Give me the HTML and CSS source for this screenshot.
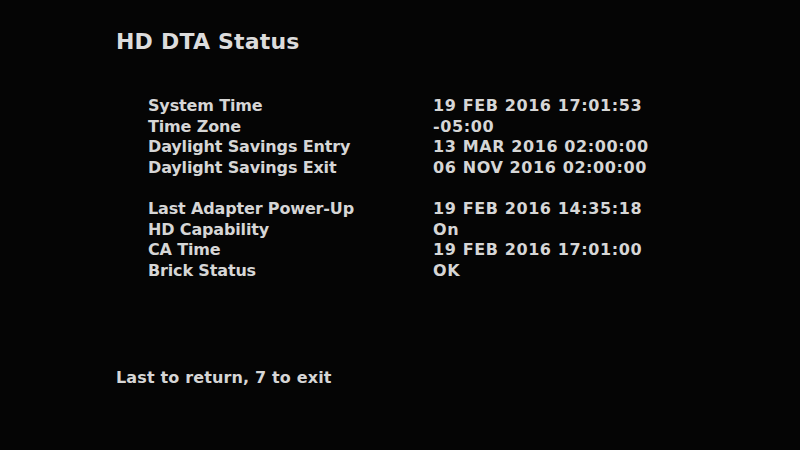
FILE: index.html
```html
<!DOCTYPE html>
<html>
<head>
<meta charset="utf-8">
<link rel="stylesheet" href="styles.css">
</head>
<body>
<div class="screen">
  <h1 class="title">HD DTA Status</h1>
  <div class="table">
    <div class="group">
      <div class="row"><span class="label">System Time</span><span class="value">19 FEB 2016 17:01:53</span></div>
      <div class="row"><span class="label">Time Zone</span><span class="value">-05:00</span></div>
      <div class="row"><span class="label">Daylight Savings Entry</span><span class="value">13 MAR 2016 02:00:00</span></div>
      <div class="row"><span class="label">Daylight Savings Exit</span><span class="value">06 NOV 2016 02:00:00</span></div>
    </div>
    <div class="group">
      <div class="row"><span class="label">Last Adapter Power-Up</span><span class="value">19 FEB 2016 14:35:18</span></div>
      <div class="row"><span class="label">HD Capability</span><span class="value">On</span></div>
      <div class="row"><span class="label">CA Time</span><span class="value">19 FEB 2016 17:01:00</span></div>
      <div class="row"><span class="label">Brick Status</span><span class="value">OK</span></div>
    </div>
  </div>
  <div class="footer">Last to return, 7 to exit</div>
</div>
</body>
</html>
```
FILE: styles.css
```css
html, body {
  margin: 0;
  padding: 0;
  background: #050505;
}
.screen {
  width: 800px;
  height: 450px;
  box-sizing: border-box;
  padding: 28px 0 0 116px;
  color: #d6d6d6;
  font-family: "DejaVu Sans", sans-serif;
  display: flex;
  flex-direction: column;
}
.title {
  margin: 0;
  font-size: 22px;
  font-weight: bold;
  line-height: 28px;
  color: #dcdcdc;
  letter-spacing: 0.2px;
}
.table {
  margin: 40px 0 0 32px;
  display: flex;
  flex-direction: column;
  gap: 21px;
}
.row {
  display: flex;
  font-size: 16px;
  line-height: 20.5px;
  font-weight: bold;
}
.label {
  width: 285px;
  letter-spacing: -0.15px;
}
.value {
  letter-spacing: 0.6px;
}
.footer {
  margin-top: 87px;
  font-size: 16px;
  font-weight: bold;
  line-height: 20px;
  letter-spacing: 0.15px;
}
```
